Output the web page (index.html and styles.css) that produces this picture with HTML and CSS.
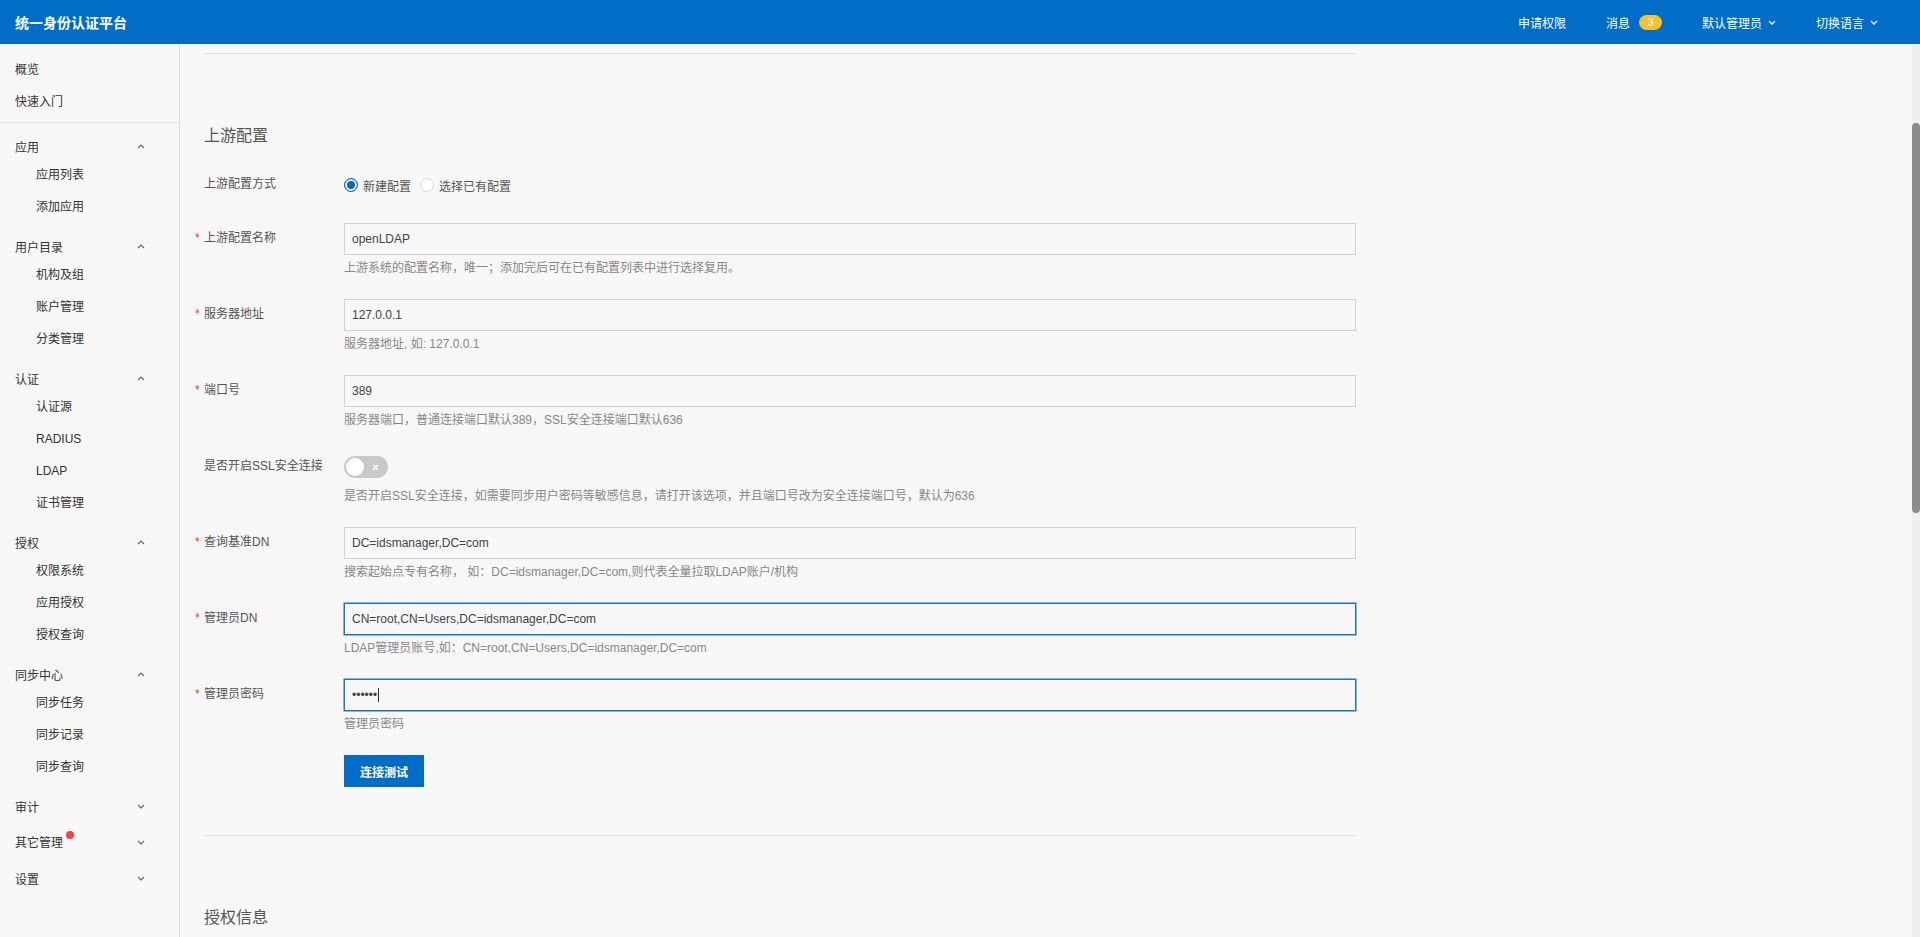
FILE: index.html
```html
<!DOCTYPE html>
<html lang="zh-CN">
<head>
    <meta charset="UTF-8">
    <meta name="viewport" content="width=device-width, initial-scale=1.0">
    <title>统一身份认证平台</title>
    <link rel="stylesheet" href="styles.css">
</head>
<body>

<header class="topbar">
    <div class="brand">统一身份认证平台</div>
    <nav class="top-nav">
        <a class="top-link">申请权限</a>
        <a class="top-link">消息<span class="badge">3</span></a>
        <a class="top-link">默认管理员
            <svg class="caret" width="8" height="5" viewBox="0 0 8 5"><path d="M1 1l3 3 3-3" fill="none" stroke="#fff" stroke-width="1.4"/></svg>
        </a>
        <a class="top-link">切换语言
            <svg class="caret" width="8" height="5" viewBox="0 0 8 5"><path d="M1 1l3 3 3-3" fill="none" stroke="#fff" stroke-width="1.4"/></svg>
        </a>
    </nav>
</header>

<div class="layout">
    <aside class="sidebar">
        <ul class="menu-top">
            <li>概览</li>
            <li>快速入门</li>
        </ul>

        <div class="menu-group">
            <div class="group-title"><span>应用</span><svg width="8" height="5" viewBox="0 0 8 5"><path d="M1 4l3-3 3 3" fill="none" stroke="#666" stroke-width="1.2"/></svg></div>
            <ul class="sub">
                <li>应用列表</li>
                <li>添加应用</li>
            </ul>
        </div>
        <div class="menu-group">
            <div class="group-title"><span>用户目录</span><svg width="8" height="5" viewBox="0 0 8 5"><path d="M1 4l3-3 3 3" fill="none" stroke="#666" stroke-width="1.2"/></svg></div>
            <ul class="sub">
                <li>机构及组</li>
                <li>账户管理</li>
                <li>分类管理</li>
            </ul>
        </div>
        <div class="menu-group">
            <div class="group-title"><span>认证</span><svg width="8" height="5" viewBox="0 0 8 5"><path d="M1 4l3-3 3 3" fill="none" stroke="#666" stroke-width="1.2"/></svg></div>
            <ul class="sub">
                <li>认证源</li>
                <li>RADIUS</li>
                <li>LDAP</li>
                <li>证书管理</li>
            </ul>
        </div>
        <div class="menu-group">
            <div class="group-title"><span>授权</span><svg width="8" height="5" viewBox="0 0 8 5"><path d="M1 4l3-3 3 3" fill="none" stroke="#666" stroke-width="1.2"/></svg></div>
            <ul class="sub">
                <li>权限系统</li>
                <li>应用授权</li>
                <li>授权查询</li>
            </ul>
        </div>
        <div class="menu-group">
            <div class="group-title"><span>同步中心</span><svg width="8" height="5" viewBox="0 0 8 5"><path d="M1 4l3-3 3 3" fill="none" stroke="#666" stroke-width="1.2"/></svg></div>
            <ul class="sub">
                <li>同步任务</li>
                <li>同步记录</li>
                <li>同步查询</li>
            </ul>
        </div>
        <div class="menu-group">
            <div class="group-title"><span>审计</span><svg width="8" height="5" viewBox="0 0 8 5"><path d="M1 1l3 3 3-3" fill="none" stroke="#666" stroke-width="1.2"/></svg></div>
        </div>
        <div class="menu-group">
            <div class="group-title"><span class="has-dot">其它管理<i class="dot"></i></span><svg width="8" height="5" viewBox="0 0 8 5"><path d="M1 1l3 3 3-3" fill="none" stroke="#666" stroke-width="1.2"/></svg></div>
        </div>
        <div class="menu-group">
            <div class="group-title"><span>设置</span><svg width="8" height="5" viewBox="0 0 8 5"><path d="M1 1l3 3 3-3" fill="none" stroke="#666" stroke-width="1.2"/></svg></div>
        </div>
    </aside>

    <main class="main">
        <div class="content">

            <section class="section">
                <h3 class="section-title">上游配置</h3>

                <div class="form-item">
                    <label class="label">上游配置方式</label>
                    <div class="control radios">
                        <span class="radio checked"></span><span class="radio-text">新建配置</span>
                        <span class="radio"></span><span class="radio-text">选择已有配置</span>
                    </div>
                </div>

                <div class="form-item">
                    <label class="label required">上游配置名称</label>
                    <div class="control">
                        <input class="input" type="text" value="openLDAP">
                        <div class="help">上游系统的配置名称，唯一；添加完后可在已有配置列表中进行选择复用。</div>
                    </div>
                </div>

                <div class="form-item">
                    <label class="label required">服务器地址</label>
                    <div class="control">
                        <input class="input" type="text" value="127.0.0.1">
                        <div class="help">服务器地址, 如: 127.0.0.1</div>
                    </div>
                </div>

                <div class="form-item">
                    <label class="label required">端口号</label>
                    <div class="control">
                        <input class="input" type="text" value="389">
                        <div class="help">服务器端口，普通连接端口默认389，SSL安全连接端口默认636</div>
                    </div>
                </div>

                <div class="form-item">
                    <label class="label">是否开启SSL安全连接</label>
                    <div class="control">
                        <div class="switch-wrap">
                            <span class="switch">
                                <span class="knob"></span>
                                <svg width="7" height="7" viewBox="0 0 7 7"><path d="M1 1l5 5M6 1l-5 5" stroke="#fff" stroke-width="1.4"/></svg>
                            </span>
                        </div>
                        <div class="help">是否开启SSL安全连接，如需要同步用户密码等敏感信息，请打开该选项，并且端口号改为安全连接端口号，默认为636</div>
                    </div>
                </div>

                <div class="form-item">
                    <label class="label required">查询基准DN</label>
                    <div class="control">
                        <input class="input" type="text" value="DC=idsmanager,DC=com">
                        <div class="help">搜索起始点专有名称， 如：DC=idsmanager,DC=com,则代表全量拉取LDAP账户/机构</div>
                    </div>
                </div>

                <div class="form-item">
                    <label class="label required">管理员DN</label>
                    <div class="control">
                        <input class="input active" type="text" value="CN=root,CN=Users,DC=idsmanager,DC=com">
                        <div class="help">LDAP管理员账号,如：CN=root,CN=Users,DC=idsmanager,DC=com</div>
                    </div>
                </div>

                <div class="form-item">
                    <label class="label required">管理员密码</label>
                    <div class="control">
                        <div class="input active pwd"><span class="pwd-dots">••••••</span><span class="cursor"></span></div>
                        <div class="help">管理员密码</div>
                    </div>
                </div>

                <div class="form-item">
                    <span class="label"></span>
                    <div class="control">
                        <button class="btn-primary">连接测试</button>
                    </div>
                </div>
            </section>

            <section class="section">
                <h3 class="section-title">授权信息</h3>
            </section>

        </div>
    </main>

    <div class="scrollbar"><div class="scroll-thumb"></div></div>
</div>

</body>
</html>
```

FILE: styles.css
```css
* {
    margin: 0;
    padding: 0;
    box-sizing: border-box;
}

html, body {
    height: 100%;
    overflow: hidden;
}

body {
    font-family: "Liberation Sans", "Noto Sans CJK SC", sans-serif;
    font-size: 12px;
    color: #333;
    background-color: #f7f7f7;
}

ul {
    list-style: none;
}

/* top bar */
.topbar {
    height: 44px;
    background-color: #016dc7;
    color: #fff;
    display: flex;
    align-items: center;
    justify-content: space-between;
    padding-left: 15px;
}

.brand {
    font-size: 14px;
    font-weight: bold;
}

.top-nav {
    display: flex;
    align-items: center;
    gap: 40px;
    padding-right: 42px;
}

.top-link {
    display: flex;
    align-items: center;
    font-size: 12px;
    color: #fff;
    cursor: pointer;
}

.top-link .caret {
    margin-left: 6px;
}

.badge {
    display: inline-block;
    margin-left: 9px;
    width: 23px;
    height: 15px;
    line-height: 15px;
    border-radius: 8px;
    background-color: #f6c02e;
    color: #fff;
    font-size: 11px;
    text-align: center;
}

/* layout */
.layout {
    display: flex;
    height: calc(100% - 44px);
}

.sidebar {
    width: 180px;
    flex-shrink: 0;
    border-right: 1px solid #dcdcdc;
    background-color: #f7f7f7;
    overflow: hidden;
}

.menu-top {
    padding: 10px 0 4px;
    border-bottom: 1px solid #e2e2e2;
}

.menu-top li {
    height: 32px;
    line-height: 32px;
    padding-left: 15px;
}

.menu-group {
    padding-top: 11px;
}

.group-title {
    height: 25px;
    display: flex;
    align-items: center;
    justify-content: space-between;
    padding: 0 34px 0 15px;
}

.has-dot {
    position: relative;
    line-height: 16px;
}

.dot {
    position: absolute;
    right: -11px;
    top: -4px;
    width: 8px;
    height: 8px;
    border-radius: 50%;
    background-color: #f04444;
}

.sub li {
    height: 32px;
    line-height: 32px;
    padding-left: 36px;
}

/* main */
.main {
    flex: 1;
    overflow: hidden;
}

.content {
    width: 1176px;
    padding: 9px 0 0 24px;
}

.scrollbar {
    width: 8px;
    flex-shrink: 0;
    background-color: #eeeff2;
}

.scroll-thumb {
    margin-top: 79px;
    height: 390px;
    border-radius: 4px;
    background-color: #8c8c8c;
}

.section {
    padding: 70px 0 48px;
    border-top: 1px solid #dcdfe6;
}

.section-title {
    font-size: 16px;
    font-weight: normal;
    line-height: 24px;
    color: #555;
    margin-bottom: 21px;
}

.form-item {
    display: flex;
    align-items: flex-start;
    margin-bottom: 22px;
}

.form-item:last-child {
    margin-bottom: 0;
}

.label {
    width: 140px;
    flex-shrink: 0;
    line-height: 30px;
    color: #555;
}

.label.required::before {
    content: "*";
    display: inline-block;
    width: 9px;
    margin-left: -9px;
    color: #e8412f;
}

.control {
    flex: 1;
}

.input {
    display: block;
    width: 100%;
    height: 32px;
    padding: 0 7px;
    border: 1px solid #cdd3dd;
    background-color: #f7f7f7;
    font-family: inherit;
    font-size: 12px;
    color: #444;
    outline: none;
}

.input.active {
    border-color: #1f72c9;
    box-shadow: 0 0 0 0.5px #1f72c9;
}

.pwd {
    display: flex;
    align-items: center;
}

.pwd-dots {
    font-size: 12px;
    color: #444;
}

.cursor {
    display: inline-block;
    width: 1px;
    height: 14px;
    margin-left: 1px;
    background-color: #333;
}

.help {
    padding-top: 4px;
    line-height: 18px;
    color: #888;
}

.radios {
    display: flex;
    align-items: center;
    height: 32px;
    color: #555;
}

.radio {
    width: 14px;
    height: 14px;
    border-radius: 50%;
    border: 1px solid #d3d7de;
    background-color: #fff;
    margin-right: 5px;
}

.radio.checked {
    border-color: #0466c8;
    background-color: #0466c8;
    box-shadow: inset 0 0 0 2px #fff;
}

.radio-text {
    margin-right: 9px;
}

.switch-wrap {
    height: 32px;
    display: flex;
    align-items: center;
}

.switch {
    width: 44px;
    height: 22px;
    border-radius: 11px;
    background-color: #c9c9c9;
    display: flex;
    align-items: center;
    padding-left: 2px;
}

.knob {
    width: 18px;
    height: 18px;
    border-radius: 50%;
    background-color: #fff;
    margin-right: 8px;
}

.btn-primary {
    width: 80px;
    height: 32px;
    border: none;
    background-color: #016dc7;
    color: #fff;
    font-family: inherit;
    font-size: 12px;
    font-weight: bold;
    cursor: pointer;
}
```
